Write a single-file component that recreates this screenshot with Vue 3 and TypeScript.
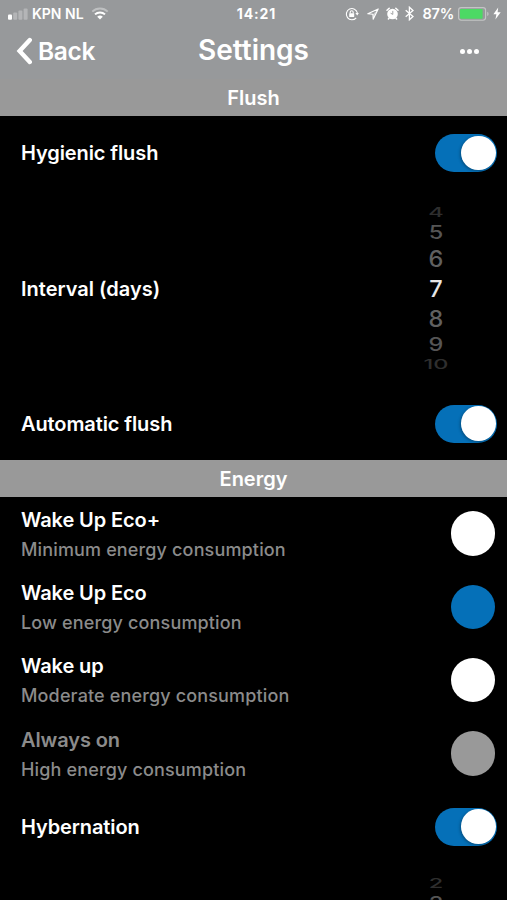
<script setup lang="ts">
import { ref } from 'vue'

interface WheelItem {
  value: number
  height: number
  scale: number
  color: string
}

interface Mode {
  title: string
  detail: string
  state: 'idle' | 'selected' | 'disabled'
}

const hygienicFlush = ref(true)
const automaticFlush = ref(true)
const hybernation = ref(true)

// Row height, vertical squeeze and shade of each step from the wheel's top edge.
const steps = [
  { height: 15.2, scale: 0.56, color: '#2e2e2e' },
  { height: 24.4, scale: 0.79, color: '#555' },
  { height: 28, scale: 0.95, color: '#606060' },
  { height: 32, scale: 1, color: '#e6e6e6' },
  { height: 28, scale: 0.95, color: '#606060' },
  { height: 24.4, scale: 0.79, color: '#555' },
  { height: 15.2, scale: 0.56, color: '#2e2e2e' },
]

function wheel(first: number, count: number): WheelItem[] {
  return steps.slice(0, count).map((step, i) => ({ value: first + i, ...step }))
}

const intervalWheel = wheel(4, 7)
const hybernationWheel = wheel(2, 2)

const modes: Mode[] = [
  { title: 'Wake Up Eco+', detail: 'Minimum energy consumption', state: 'idle' },
  { title: 'Wake Up Eco', detail: 'Low energy consumption', state: 'selected' },
  { title: 'Wake up', detail: 'Moderate energy consumption', state: 'idle' },
  { title: 'Always on', detail: 'High energy consumption', state: 'disabled' },
]
</script>

<template>
  <main class="screen">
    <header class="top">
      <div class="status">
        <div class="status-left">
          <svg class="signal" width="20" height="12" viewBox="0 0 20 12" fill="#fff">
            <rect x="0" y="6.4" width="4" height="5.4" rx="1" />
            <g opacity=".28">
              <rect x="5.2" y="4.6" width="4" height="7.2" rx="1" />
              <rect x="10.4" y="2.6" width="4" height="9.2" rx="1" />
              <rect x="15.6" y="0.4" width="4" height="11.4" rx="1" />
            </g>
          </svg>
          <span class="carrier">KPN NL</span>
          <svg class="wifi" width="18" height="13" viewBox="0 0 18 13" fill="none" stroke="#fff" stroke-width="2">
            <path d="M1.3 4.6a11 11 0 0 1 15.4 0" opacity=".38" />
            <path d="M4 7.4a7.2 7.2 0 0 1 10 0" />
            <path d="M9 12.6 6.2 9.8a4 4 0 0 1 5.6 0z" fill="#fff" stroke="none" />
          </svg>
        </div>
        <span class="clock">14:21</span>
        <div class="status-right">
          <svg width="14" height="14" viewBox="0 0 14 14" fill="none" stroke="#fff" stroke-width="1.1">
            <path d="M11.2 10.8A5.6 5.6 0 1 1 12.4 6" />
            <path d="M10.4 6.1h3.5l-1.7 2.5z" fill="#fff" stroke="none" />
            <rect x="4.2" y="6.2" width="5" height="3.8" rx=".6" fill="#fff" stroke="none" />
            <path d="M5.2 6.4V5.2a1.5 1.5 0 0 1 3 0v1.2" />
          </svg>
          <svg class="location" width="12" height="12" viewBox="0 0 12 12" fill="none" stroke="#fff" stroke-width="1.1" stroke-linejoin="round">
            <path d="M11.2.9.8 5.8l5.1.5.3 4.9z" />
            <path d="M11.2.9 5.9 6.3l.3 4.9z" fill="#fff" fill-opacity=".5" stroke="none" />
          </svg>
          <svg class="alarm" width="13" height="13" viewBox="0 0 13 13">
            <circle cx="6.5" cy="7" r="5.3" fill="#fff" />
            <path d="M1 3.3 3.2 1.2M12 3.3 9.8 1.2M3 11.2l-.6.8M10 11.2l.6.8" stroke="#fff" stroke-width="1.5" stroke-linecap="round" />
            <path d="M6.8 3.9V7.4L4.6 6.2" fill="none" stroke="#97999b" stroke-width=".9" />
          </svg>
          <svg class="bluetooth" width="9" height="15" viewBox="0 0 9 15" fill="none" stroke="#fff" stroke-width="1.3">
            <path d="M.7 4.2 8 10.6 4.4 13.8V1.2L8 4.4.7 10.8" />
          </svg>
          <span class="percent">87%</span>
          <svg class="battery" width="31" height="14" viewBox="0 0 31 14">
            <rect x=".6" y=".6" width="27" height="12.6" rx="2.6" fill="none" stroke="#c3c5c5" stroke-width="1.1" />
            <rect x="2" y="2" width="22.6" height="9.8" rx="1" fill="#4cd964" />
            <path d="M29.2 4.8q1.4.6 1.4 2.1t-1.4 2.1z" fill="#c3c5c5" />
          </svg>
          <svg class="bolt" width="8" height="13" viewBox="0 0 8 13" fill="#fff">
            <path d="M5.2.6.4 7.3H3.4L2.4 12.4 7.7 5.3H4.6z" />
          </svg>
        </div>
      </div>
      <nav class="nav">
        <button class="back" type="button">
          <svg width="17" height="28" viewBox="0 0 17 28" fill="none" stroke="#fff" stroke-width="4.4" stroke-linecap="round" stroke-linejoin="miter">
            <path d="M14.8 3 4.6 14l10.2 11" />
          </svg>
          <span>Back</span>
        </button>
        <h1>Settings</h1>
        <button class="more" type="button" aria-label="More">
          <i></i><i></i><i></i>
        </button>
      </nav>
    </header>

    <h2 class="section">Flush</h2>
    <section class="group">
      <div class="row">
        <span class="label">Hygienic flush</span>
        <button class="toggle" type="button" role="switch" :class="{ off: !hygienicFlush }" @click="hygienicFlush = !hygienicFlush"></button>
      </div>
      <div class="row picker-row">
        <span class="label wide">Interval (days)</span>
        <div class="wheel">
          <span v-for="item in intervalWheel" :key="item.value" :style="{ height: item.height + 'px', color: item.color }">
            <b :style="{ transform: `scaleY(${item.scale})` }">{{ item.value }}</b>
          </span>
        </div>
      </div>
      <div class="row auto-row">
        <span class="label">Automatic flush</span>
        <button class="toggle" type="button" role="switch" :class="{ off: !automaticFlush }" @click="automaticFlush = !automaticFlush"></button>
      </div>
    </section>

    <h2 class="section">Energy</h2>
    <section class="group">
      <div v-for="mode in modes" :key="mode.title" class="mode" :class="mode.state">
        <div class="mode-text">
          <span class="label">{{ mode.title }}</span>
          <span class="detail">{{ mode.detail }}</span>
        </div>
        <span class="dot"></span>
      </div>
      <div class="row hyb-row">
        <span class="label">Hybernation</span>
        <button class="toggle" type="button" role="switch" :class="{ off: !hybernation }" @click="hybernation = !hybernation"></button>
      </div>
      <div class="row wheel-only">
        <div class="wheel">
          <span v-for="item in hybernationWheel" :key="item.value" :style="{ height: item.height + 'px', color: item.color }">
            <b :style="{ transform: `scaleY(${item.scale})` }">{{ item.value }}</b>
          </span>
        </div>
      </div>
    </section>
  </main>
</template>

<style>
body {
  margin: 0;
  background: #000;
}
</style>

<style scoped>
.screen {
  width: 507px;
  height: 900px;
  overflow: hidden;
  background: #000;
  color: #fff;
  font-family: Inter, "Liberation Sans", sans-serif;
  font-weight: 600;
}
svg {
  display: block;
  flex: none;
}
button {
  border: 0;
  padding: 0;
  background: none;
  color: inherit;
  font: inherit;
}
.top {
  height: 79px;
  background: #97999b;
}
.status {
  display: grid;
  grid-template-columns: 1fr auto 1fr;
  align-items: center;
  height: 27px;
  padding: 0 6px 0 8px;
  font-size: 14px;
}
.status-left,
.status-right {
  display: flex;
  align-items: center;
}
.status-right {
  justify-content: flex-end;
}
.carrier {
  margin: 0 7px 0 4px;
}
.clock {
  margin-left: 4px;
  font-weight: 700;
  letter-spacing: 0.9px;
}
.location {
  margin-left: 8px;
}
.alarm {
  margin-left: 7px;
}
.bluetooth {
  margin-left: 6px;
}
.percent {
  margin: 0 4px 0 8px;
  font-size: 14.5px;
  letter-spacing: -0.2px;
}
.bolt {
  margin-left: 4px;
}
.nav {
  display: grid;
  grid-template-columns: 1fr auto 1fr;
  align-items: center;
  height: 48px;
  padding: 0 28px;
}
.back {
  display: flex;
  align-items: center;
  gap: 6px;
  margin-left: -13px;
  font-size: 24.5px;
  letter-spacing: -0.35px;
}
h1 {
  margin: 0;
  padding-bottom: 2px;
  font-size: 28px;
  font-weight: 600;
  line-height: 34px;
}
.more {
  display: flex;
  justify-self: end;
  gap: 2px;
}
.more i {
  width: 5px;
  height: 5px;
  border-radius: 50%;
  background: #fff;
}
.section {
  height: 37px;
  margin: 0;
  background: #999;
  font-size: 20px;
  font-weight: 600;
  line-height: 38px;
  text-align: center;
}
.row {
  display: flex;
  align-items: center;
  justify-content: space-between;
  height: 74px;
  padding: 0 10px 0 21px;
}
.label {
  font-size: 20px;
  line-height: 26px;
  letter-spacing: -0.1px;
}
.label.wide {
  letter-spacing: 0;
}
.picker-row {
  height: 197px;
}
.auto-row {
  height: 73px;
}
.toggle {
  display: flex;
  align-items: center;
  justify-content: flex-end;
  width: 62px;
  height: 38px;
  padding: 0 1.5px;
  border-radius: 19px;
  background: #0570b8;
}
.toggle::after {
  content: "";
  width: 34.5px;
  height: 34.5px;
  border-radius: 50%;
  background: #fff;
  box-shadow: -1px 1px 3px rgba(0, 0, 0, 0.3);
}
.toggle.off {
  justify-content: flex-start;
  background: #777;
}
.wheel {
  display: flex;
  flex-direction: column;
  width: 40px;
  margin-right: 41px;
  padding-top: 1px;
}
.wheel span {
  display: flex;
  align-items: center;
  justify-content: center;
}
.wheel b {
  font-size: 23.5px;
  font-weight: 500;
  line-height: 24px;
}
.mode {
  display: flex;
  align-items: center;
  justify-content: space-between;
  height: 73.3px;
  padding: 0 12px 0 21px;
}
.mode-text {
  display: flex;
  flex-direction: column;
  gap: 4px;
  padding-top: 2px;
}
.detail {
  color: #8b8b8b;
  font-size: 18px;
  font-weight: 500;
  letter-spacing: 0.15px;
  line-height: 26px;
}
.dot {
  width: 44.5px;
  height: 44.5px;
  border-radius: 50%;
  background: #fff;
}
.selected .dot {
  background: #0570b8;
}
.disabled .dot {
  background: #999;
}
.disabled .label {
  color: #8b8b8b;
}
.hyb-row {
  height: 73px;
}
.wheel-only {
  height: 167px;
  padding-top: 12px;
  align-items: flex-start;
  justify-content: flex-end;
}
</style>
